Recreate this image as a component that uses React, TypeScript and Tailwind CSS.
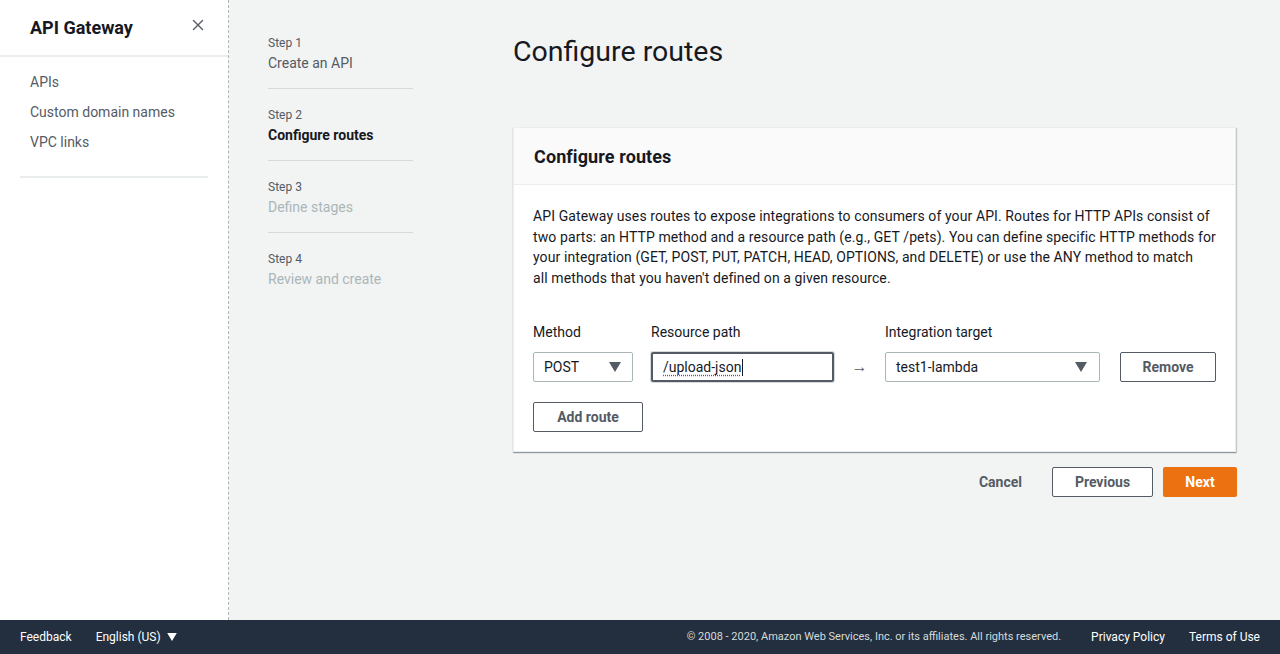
import { X } from 'lucide-react';

const font = { fontFamily: 'Roboto, "Noto Sans", sans-serif' };

function Caret({ className = '' }: { className?: string }) {
  return (
    <svg viewBox="0 0 12 10" className={className} width="12" height="10">
      <path d="M0 0 L12 0 L6 10 Z" fill="currentColor" />
    </svg>
  );
}

const steps = [
  { step: 'Step 1', title: 'Create an API', state: 'done' },
  { step: 'Step 2', title: 'Configure routes', state: 'current' },
  { step: 'Step 3', title: 'Define stages', state: 'todo' },
  { step: 'Step 4', title: 'Review and create', state: 'todo' },
];

const intro = [
  'API Gateway uses routes to expose integrations to consumers of your API. Routes for HTTP APIs consist of',
  'two parts: an HTTP method and a resource path (e.g., GET /pets). You can define specific HTTP methods for',
  'your integration (GET, POST, PUT, PATCH, HEAD, OPTIONS, and DELETE) or use the ANY method to match',
  "all methods that you haven't defined on a given resource.",
];

export default function App() {
  return (
    <div className="flex flex-col h-[654px] w-[1280px] overflow-hidden bg-[#f2f3f3] text-[#16191f]" style={font}>
      <div className="flex flex-1 min-h-0">
        {/* side navigation */}
        <aside className="w-[229px] shrink-0 bg-white border-r border-dashed border-[#aab7b8]">
          <div className="h-[57px] flex items-center justify-between pl-[30px] pr-[21px] border-b-2 border-[#eaeded]">
            <h2 className="text-[18px] font-bold text-[#16191f]">API Gateway</h2>
            <X className="w-[18px] h-[18px] text-[#545b64] -mt-[6px]" strokeWidth={1.8} />
          </div>
          <nav className="pt-[10px] pl-[30px] text-[14px] text-[#545b64]">
            <div className="h-[30px] leading-[30px]">APIs</div>
            <div className="h-[30px] leading-[30px]">Custom domain names</div>
            <div className="h-[30px] leading-[30px]">VPC links</div>
          </nav>
          <div className="mx-[20px] mt-[19px] border-t-2 border-[#eaeded]" />
        </aside>

        {/* main */}
        <main className="flex-1 flex pl-[39px] pr-[43px]">
          <ol className="w-[145px] shrink-0 pt-[35px]">
            {steps.map((s, i) => (
              <li
                key={s.step}
                className={
                  'pb-[14px] ' + (i < steps.length - 1 ? 'border-b border-[#d5dbdb] mb-[18px]' : '')
                }
              >
                <div className="text-[12px] leading-[16px] text-[#545b64]">{s.step}</div>
                <div
                  className={
                    'text-[14px] leading-[22px] mt-[1px] ' +
                    (s.state === 'current'
                      ? 'font-bold text-[#16191f]'
                      : s.state === 'done'
                      ? 'text-[#545b64]'
                      : 'text-[#aab7b8]')
                  }
                >
                  {s.title}
                </div>
              </li>
            ))}
          </ol>

          <div className="flex-1 ml-[100px]">
            <h1 className="text-[28.5px] leading-[36px] pt-[34px] text-[#16191f]">Configure routes</h1>

            <section className="mt-[57px] mr-[1px] bg-white border border-[#eaeded] shadow-[0_1px_1px_0_rgba(0,28,36,0.3),1px_1px_1px_0_rgba(0,28,36,0.15)]">
              <div className="h-[57px] flex items-center px-[20px] bg-[#fafafa] border-b border-[#eaeded]">
                <h2 className="text-[18px] font-bold tracking-[0.1px] pt-[1px]">Configure routes</h2>
              </div>
              <div className="px-[19px] pt-[21px] pb-[19px]">
                <p className="text-[14px] leading-[20.5px] tracking-[0.1px] text-[#16191f]">
                  {intro.map((line) => (
                    <span key={line} className="block whitespace-nowrap">
                      {line}
                    </span>
                  ))}
                </p>

                <div className="flex items-end mt-[34px]">
                  <div className="w-[100px]">
                    <label className="block text-[14px] leading-[20px] mb-[10px]">Method</label>
                    <div className="h-[30px] flex items-center justify-between px-[10px] border border-[#aab7b8] rounded-[2px] text-[14px]">
                      <span>POST</span>
                      <Caret className="text-[#545b64] mr-[1px]" />
                    </div>
                  </div>
                  <div className="w-[183px] ml-[18px]">
                    <label className="block text-[14px] leading-[20px] mb-[10px]">Resource path</label>
                    <div className="h-[30px] flex items-center px-[10px] border-2 border-[#545b64] rounded-[2px] text-[14px] shadow-[0_0_0_1px_#d5dbdb]">
                      <span className="underline decoration-dotted decoration-[#d13212] underline-offset-[3px]">/upload-json</span>
                      <span className="w-px h-[17px] bg-[#16191f] ml-[1px]" />
                    </div>
                  </div>
                  <div className="w-[51px] h-[30px] flex items-center justify-center text-[16px] text-[#545b64]">→</div>
                  <div className="w-[215px]">
                    <label className="block text-[14px] leading-[20px] mb-[10px]">Integration target</label>
                    <div className="h-[30px] flex items-center justify-between px-[10px] border border-[#aab7b8] rounded-[2px] text-[14px]">
                      <span>test1-lambda</span>
                      <Caret className="text-[#545b64] mr-[2px]" />
                    </div>
                  </div>
                  <button className="ml-[20px] w-[96px] h-[30px] border border-[#545b64] rounded-[2px] text-[14px] font-bold text-[#545b64] bg-white">
                    Remove
                  </button>
                </div>

                <button className="mt-[20px] w-[110px] h-[30px] border border-[#545b64] rounded-[2px] text-[14px] font-bold text-[#545b64] bg-white">
                  Add route
                </button>
              </div>
            </section>

            <div className="flex justify-end items-center mt-[15px] gap-[10px]">
              <button className="h-[30px] px-[20px] text-[14px] font-bold text-[#545b64]">Cancel</button>
              <button className="h-[30px] w-[101px] border border-[#545b64] rounded-[2px] bg-white text-[14px] font-bold text-[#545b64]">
                Previous
              </button>
              <button className="h-[30px] w-[74px] rounded-[2px] bg-[#ec7211] text-[14px] font-bold text-white">
                Next
              </button>
            </div>
          </div>
        </main>
      </div>

      {/* footer */}
      <footer className="h-[34px] shrink-0 bg-[#232f3e] flex items-center px-[20px] text-[12px] text-[#d5dbdb]">
        <span className="text-white">Feedback</span>
        <span className="ml-[24px] flex items-center gap-[6px] text-white">
          English (US)
          <Caret className="w-[10px] h-[8px]" />
        </span>
        <span className="ml-auto text-[11px]">© 2008 - 2020, Amazon Web Services, Inc. or its affiliates. All rights reserved.</span>
        <span className="ml-[30px] text-white">Privacy Policy</span>
        <span className="ml-[24px] text-white">Terms of Use</span>
      </footer>
    </div>
  );
}
